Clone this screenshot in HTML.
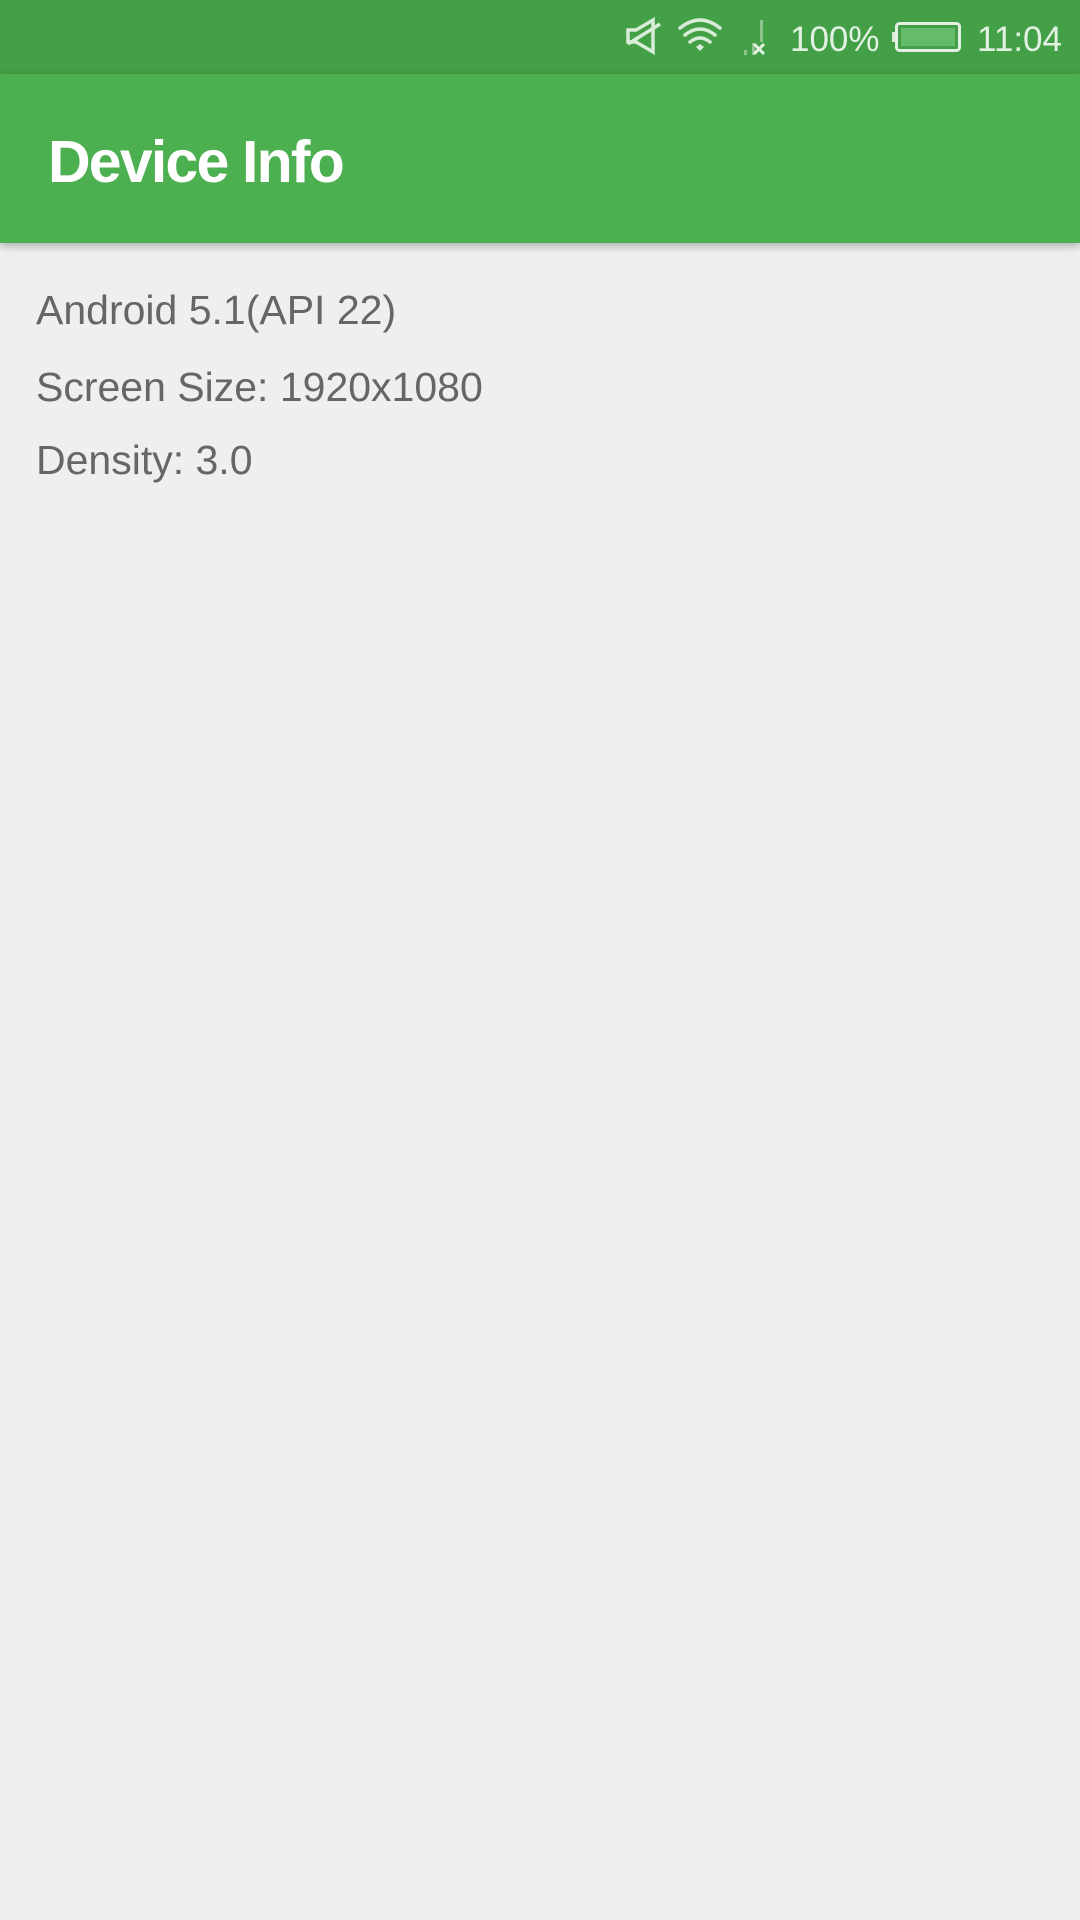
<!DOCTYPE html>
<html><head><meta charset="utf-8"><style>
html,body{margin:0;padding:0}
body{width:1080px;height:1920px;background:#efefef;position:relative;overflow:hidden;font-family:"Liberation Sans",sans-serif}
.sb{position:absolute;left:0;top:0;width:1080px;height:74px;background:#43a047}
.ab{position:absolute;left:0;top:74px;width:1080px;height:169px;background:#4caf50;box-shadow:0 3px 8px rgba(0,0,0,.28)}
.t{position:absolute;white-space:nowrap;line-height:1}
.title{left:48px;top:133px;font-size:59px;color:#fff;font-weight:bold;letter-spacing:-1.8px}
.b{left:36px;font-size:41px;color:#666}
.st{font-size:35px;color:#e3f1e3;top:22px}
</style></head><body>
<div class="sb"></div>
<div class="ab"></div>
<svg style="position:absolute;left:620px;top:14px" width="160" height="46" viewBox="0 0 160 46">
 <g fill="none" stroke="#d8ecd8" stroke-width="3.5">
  <path d="M8 16 H16 L33 6 V38 L16 28 H8 Z"/>
  <path d="M8 30 L40 10"/>
 </g>
 <g fill="none" stroke="#d8ecd8" stroke-width="3.5" stroke-linecap="round">
  <path d="M60 14 Q80 -2 100 14"/>
  <path d="M65 21 Q80 9 95 21"/>
  <path d="M70 28 Q80 20 90 28"/>
 </g>
 <path d="M76 33 L80 30 L84 33 L80 37 Z" fill="#d8ecd8"/>
 <rect x="124" y="36" width="3" height="5" fill="#8cc48c"/>
 <rect x="132" y="29" width="3" height="12" fill="#8cc48c"/>
 <rect x="140" y="6" width="3" height="22" fill="#8cc48c"/>
 <path d="M134 30 L144 40 M144 30 L134 40" stroke="#e3f1e3" stroke-width="3"/>
</svg>
<div class="t st" style="left:790px">100%</div>
<svg style="position:absolute;left:889px;top:21px" width="74" height="32">
 <rect x="3" y="11" width="4" height="10" fill="#d8ecd8"/>
 <rect x="7.5" y="2.5" width="63" height="27" rx="3" fill="none" stroke="#e3f1e3" stroke-width="3"/>
 <rect x="12" y="7" width="54" height="18" fill="#66bb6a"/>
</svg>
<div class="t st" style="left:977px">11:04</div>
<div class="t title">Device Info</div>
<div class="t b" style="top:290px">Android 5.1(API 22)</div>
<div class="t b" style="top:367px">Screen Size: 1920x1080</div>
<div class="t b" style="top:440px">Density: 3.0</div>
</body></html>
